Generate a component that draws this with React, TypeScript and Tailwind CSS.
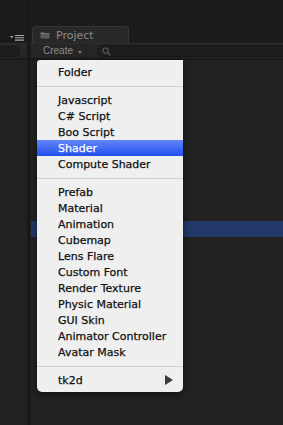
const font = "font-['DejaVu_Sans',_'Liberation_Sans',_sans-serif]";

type MenuEntry = { label: string; active?: boolean; sub?: boolean } | "sep";

const entries: MenuEntry[] = [
  { label: "Folder" },
  "sep",
  { label: "Javascript" },
  { label: "C# Script" },
  { label: "Boo Script" },
  { label: "Shader", active: true },
  { label: "Compute Shader" },
  "sep",
  { label: "Prefab" },
  { label: "Material" },
  { label: "Animation" },
  { label: "Cubemap" },
  { label: "Lens Flare" },
  { label: "Custom Font" },
  { label: "Render Texture" },
  { label: "Physic Material" },
  { label: "GUI Skin" },
  { label: "Animator Controller" },
  { label: "Avatar Mask" },
  "sep",
  { label: "tk2d", sub: true },
];

function SearchIcon() {
  return (
    <svg width="9" height="9" viewBox="0 0 9 9" className="shrink-0">
      <circle cx="3.6" cy="3.6" r="2.6" fill="none" stroke="#5a5a5a" strokeWidth="1.1" />
      <path d="M5.5 5.5 L8.3 8.3" stroke="#5a5a5a" strokeWidth="1.4" />
    </svg>
  );
}

function FolderIcon() {
  return (
    <svg width="10" height="8" viewBox="0 0 10 8">
      <path d="M0.5 1 H3.8 L4.6 1.9 H9.5 V7.5 H0.5 Z" fill="#5c5c5c" />
      <path d="M0.5 2.6 H9.5" stroke="#787878" strokeWidth="0.8" />
    </svg>
  );
}

function CreateMenu() {
  return (
    <div
      className={`absolute left-[37px] top-[60px] w-[146px] py-[4px] bg-[#efefef] rounded-b-[5px] rounded-tl-[3px] shadow-[0_2px_8px_rgba(0,0,0,0.55)] ${font} text-[11px] text-[#111111] [-webkit-text-stroke:0.25px]`}
    >
      {entries.map((entry, i) =>
        entry === "sep" ? (
          <div key={i} className="h-[12px] flex items-center">
            <div className="h-px w-full bg-[#cfcfcf]" />
          </div>
        ) : (
          <div
            key={i}
            className={`h-[16px] flex items-center pl-[21px] pr-[10px] leading-none ${
              entry.active ? "bg-gradient-to-b from-[#6384f7] to-[#1f4ff0] text-white" : ""
            }`}
          >
            <span className="flex-1">{entry.label}</span>
            {entry.sub ? (
              <svg width="8" height="10" viewBox="0 0 8 10">
                <path d="M0 0 L8 5 L0 10 Z" fill="#3a3a3a" />
              </svg>
            ) : null}
          </div>
        )
      )}
    </div>
  );
}

export default function App() {
  return (
    <div className="relative w-[283px] h-[425px] overflow-hidden bg-[#1b1b1b] flex">
      {/* left panel */}
      <div className="w-[27px] flex flex-col">
        <div className="h-[43px] flex items-end justify-end pr-[3px] pb-[2px]">
          <svg width="14" height="6" viewBox="0 0 14 6">
            <path d="M0 1 H3.5 L1.75 3.2 Z" fill="#a8a8a8" />
            <path d="M5 0.5 H14 M5 2.8 H14 M5 5.1 H14" stroke="#a8a8a8" strokeWidth="1.1" />
          </svg>
        </div>
        <div className="h-[17px] bg-[#262626] border-t border-[#2e2e2e] border-b-2 border-b-[#1a1a1a] flex items-center">
          <div className="h-[11px] w-[20px] rounded-r-full bg-[#1e1e1e] border border-l-0 border-[#181818]" />
        </div>
        <div className="flex-1 bg-[#212121]" />
      </div>
      <div className="w-[4px] bg-[#191919] border-r border-[#1d1d1d]" />

      {/* project panel */}
      <div className="flex-1 flex flex-col">
        <div className="h-[43px] flex items-end pl-[1px]">
          <div className="h-[17px] w-[97px] rounded-t-[4px] bg-[#282828] border-t border-x border-[#363636] flex items-center gap-[6px] pl-[7px]">
            <FolderIcon />
            <span className={`${font} text-[11px] text-[#8c8c8c] leading-none`}>Project</span>
          </div>
        </div>
        <div className="h-[17px] bg-[#262626] border-t border-[#2e2e2e] border-b-2 border-b-[#1a1a1a] flex items-center">
          <div className="flex items-center pl-[12px] pr-[4px] h-full border-r border-[#1c1c1c]">
            <span className="font-['Liberation_Sans',_sans-serif] text-[10px] text-[#8a8a8a] leading-none">Create</span>
            <svg width="4" height="3" viewBox="0 0 4 3" className="ml-[5px] mt-[2px]">
              <path d="M0 0 H4 L2 3 Z" fill="#7a7a7a" />
            </svg>
          </div>
          <div className="ml-[10px] flex-1 h-[12px] rounded-l-full bg-[#1e1e1e] border border-r-0 border-[#181818] flex items-center pl-[4px]">
            <SearchIcon />
          </div>
        </div>
        <div className="flex-1 bg-[#222222] flex flex-col">
          <div className="h-[161px]" />
          <div className="h-[16px] bg-[#22396a]" />
        </div>
      </div>

      <CreateMenu />
    </div>
  );
}
